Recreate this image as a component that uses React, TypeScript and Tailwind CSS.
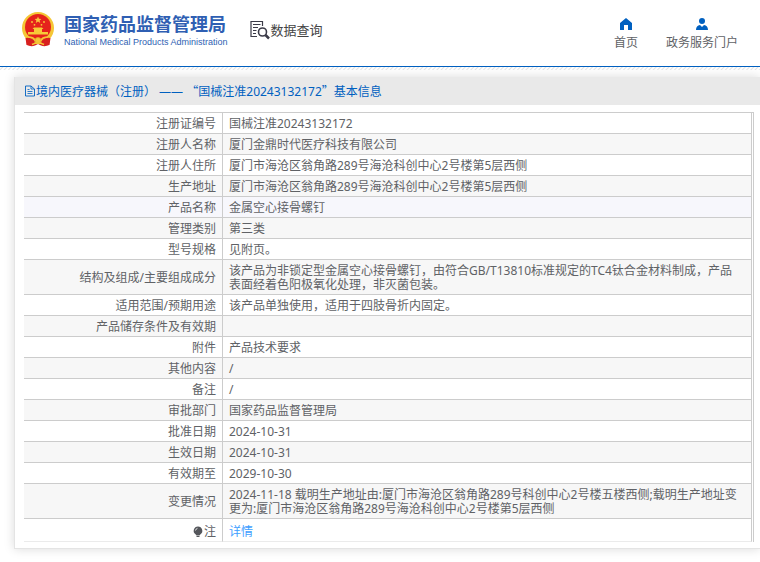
const rows = [
  { label: '注册证编号', value: '国械注准20243132172' },
  { label: '注册人名称', value: '厦门金鼎时代医疗科技有限公司' },
  { label: '注册人住所', value: '厦门市海沧区翁角路289号海沧科创中心2号楼第5层西侧' },
  { label: '生产地址', value: '厦门市海沧区翁角路289号海沧科创中心2号楼第5层西侧' },
  { label: '产品名称', value: '金属空心接骨螺钉', active: true },
  { label: '管理类别', value: '第三类' },
  { label: '型号规格', value: '见附页。' },
  {
    label: '结构及组成/主要组成成分',
    value:
      '该产品为非锁定型金属空心接骨螺钉，由符合GB/T13810标准规定的TC4钛合金材料制成，产品表面经着色阳极氧化处理，非灭菌包装。',
  },
  { label: '适用范围/预期用途', value: '该产品单独使用，适用于四肢骨折内固定。' },
  { label: '产品储存条件及有效期', value: '' },
  { label: '附件', value: '产品技术要求' },
  { label: '其他内容', value: '/' },
  { label: '备注', value: '/' },
  { label: '审批部门', value: '国家药品监督管理局' },
  { label: '批准日期', value: '2024-10-31' },
  { label: '生效日期', value: '2024-10-31' },
  { label: '有效期至', value: '2029-10-30' },
  {
    label: '变更情况',
    value:
      '2024-11-18 载明生产地址由:厦门市海沧区翁角路289号科创中心2号楼五楼西侧;载明生产地址变更为:厦门市海沧区翁角路289号海沧科创中心2号楼第5层西侧',
  },
]

function Emblem() {
  return (
    <svg className="h-9 w-8 shrink-0" viewBox="0 0 32 36" aria-hidden="true">
      <path d="M4 24 L5 33 Q9 35 13 33.500 L16 32 L19 33.500 Q23 35 27 33 L28 24 Z" fill="#d8201f" />
      <circle cx="16" cy="16" r="16" fill="#f5c636" />
      <circle cx="16" cy="15" r="13" fill="#e5221c" />
      <path d="M16 4.500l1 2.200 2.400.2-1.800 1.600.6 2.400-2.200-1.300-2.200 1.300.6-2.400-1.800-1.600 2.400-.2z" fill="#f9c53e" />
      <g fill="#f7cb38">
        <circle cx="10" cy="10" r="0.900" />
        <circle cx="22" cy="10" r="0.900" />
        <circle cx="12.500" cy="12.800" r="0.900" />
        <circle cx="19.500" cy="12.800" r="0.900" />
        <path d="M10.500 17 L12 15.500 H20 L21.500 17 Z M12 17h8v3h-8z M6 20h20v2.500H6z" />
      </g>
      <path d="M3.500 26 Q10 25 13 30 L10 33.500 L4.500 33 Z M28.500 26 Q22 25 19 30 L22 33.500 L27.500 33 Z" fill="#d8201f" />
      <path d="M6 25 Q12 25 13.500 29 M26 25 Q20 25 18.500 29" fill="none" stroke="#f5c636" strokeWidth="1.500" />
      <circle cx="16" cy="28.500" r="3" fill="#f5c636" stroke="#e8a52b" strokeWidth="0.800" />
      <path d="M10 32.500 Q16 29.500 22 32.500" fill="none" stroke="#f5c636" strokeWidth="1.500" />
    </svg>
  )
}

function QueryIcon() {
  return (
    <svg className="h-5 w-5 shrink-0" viewBox="0 0 20 20" fill="none" stroke="#3b3b48" aria-hidden="true">
      <path d="M12.500 6V1.500H1V16.500H7" strokeWidth="1.200" />
      <path d="M3 4.500H10.500M3 7.500H8M3 10.500H6.500M3 13.500H6" strokeWidth="1" />
      <circle cx="12.500" cy="12" r="4" strokeWidth="1.600" />
      <path d="M15.500 15L19 18.500" strokeWidth="2.500" />
    </svg>
  )
}

function HomeIcon() {
  return (
    <svg className="h-3 w-3" viewBox="0 0 12 12" fill="#0060c0" aria-hidden="true">
      <path d="M6 0 L12 5 V12 H8 V7 H4 V12 H0 V5 Z" />
    </svg>
  )
}

function UserIcon() {
  return (
    <svg className="h-3 w-3" viewBox="0 0 12 12" fill="#0060c0" aria-hidden="true">
      <circle cx="6" cy="3" r="3" />
      <path d="M0 12 C0 9 1.500 7.500 4 7 L6 9 L8 7 C10.500 7.500 12 9 12 12 Z" />
    </svg>
  )
}

function DocIcon() {
  return (
    <svg className="h-3 w-3 shrink-0" viewBox="0 0 12 12" fill="none" stroke="#0060c0" aria-hidden="true">
      <path d="M1.500 1H7L10.500 4V11H1.500Z" strokeWidth="0.900" />
      <path d="M7 1V4H10.500M3.500 4.500H5.500M3.500 6.500H8.500M3.500 8.500H8.500" strokeWidth="0.800" />
    </svg>
  )
}

function BulbIcon() {
  return (
    <svg className="h-3 w-3" viewBox="0 0 12 12" aria-hidden="true">
      <path d="M6 0.500a4.300 4.300 0 0 1 2.500 7.800L7.500 9.500h-3L3.500 8.300A4.300 4.300 0 0 1 6 0.500z" fill="#54565b" />
      <path d="M4.500 10.500h3" stroke="#54565b" />
      <path d="M3.500 4.500Q4 2.500 5.500 2.300" stroke="#fff" strokeWidth="0.800" fill="none" />
    </svg>
  )
}

const labelCell = 'border-r border-b border-[#ccc] pt-1 pb-0.5 pr-1.5 text-right font-normal'
const valueCell = 'border-r border-b border-[#ccc] pt-1 pb-0.5 pr-2 pl-1.5'

export default function App() {
  return (
    <div className="overflow-hidden bg-white pb-4 font-['Noto_Sans','Noto_Sans_CJK_SC',sans-serif] text-xs text-[#606266]">
      <header className="flex h-[67px] items-start justify-between border-b border-[#0060c0] px-[22px]">
        <div className="flex items-start">
          <a href="#" className="flex items-start gap-2.5 pt-3 text-[#2f5fb3]">
            <Emblem />
            <span className="flex flex-col whitespace-nowrap">
              <span className="text-lg/6 font-bold">国家药品监督管理局</span>
              <span className="font-['Liberation_Sans',sans-serif] text-[9px]/3">National Medical Products Administration</span>
            </span>
          </a>
          <div className="ml-[22px] flex items-center gap-px pt-5 text-[13px]/5 text-[#444]">
            <QueryIcon />
            <span>数据查询</span>
          </div>
        </div>
        <nav className="flex gap-7 pt-[18px] text-xs/[26px]">
          <a href="#" className="flex flex-col items-center">
            <HomeIcon />
            首页
          </a>
          <a href="#" className="flex flex-col items-center">
            <UserIcon />
            政务服务门户
          </a>
        </nav>
      </header>
      <div className="h-[3px] bg-[repeating-linear-gradient(135deg,#fff_0px,#fff_1px,#e4e4e4_2px,#fff_3px)]" />

      <main className="mt-[7px] ml-3.5 border-b border-l border-[#e4e4e4] pb-1.5 shadow-[0_0_10px_rgba(0,0,0,0.15)]">
        <h1 className="flex h-7 items-center bg-[#e9e9e9] pl-[9px] text-xs text-[#0060c0]">
          <DocIcon />
          <span>
            境内医疗器械（注册） ——&nbsp;
            <span className="font-['Noto_Sans_CJK_SC',sans-serif]">“</span>
            国械注准20243132172
            <span className="font-['Noto_Sans_CJK_SC',sans-serif]">”</span>
            基本信息
          </span>
        </h1>
        <div className="mt-[7px] mr-1.5 ml-[9px] border-t border-r border-[#ccc] pr-px">
          <table className="w-full border-separate border-spacing-0 text-xs/[14px]">
            <tbody>
              {rows.map((row, i) => (
                <tr key={row.label} className={row.active ? 'bg-[#f7f7fc]' : i % 2 ? 'bg-[#f7f7f7]' : 'bg-white'}>
                  <th scope="row" className={`w-[199px] ${labelCell}`}>{row.label}</th>
                  <td className={valueCell}>{row.value}</td>
                </tr>
              ))}
              <tr>
                <th scope="row" className="border-r border-b border-r-[#ccc] border-b-[#ebebeb] pt-1.5 pb-0.5 pr-1.5 font-normal">
                  <span className="flex items-center justify-end">
                    <BulbIcon />
                    注
                  </span>
                </th>
                <td className="border-r border-b border-r-[#ccc] border-b-[#ebebeb] pt-1.5 pb-0.5 pl-1.5">
                  <a href="#" className="text-[#409eff]">详情</a>
                </td>
              </tr>
            </tbody>
          </table>
        </div>
      </main>
    </div>
  )
}
